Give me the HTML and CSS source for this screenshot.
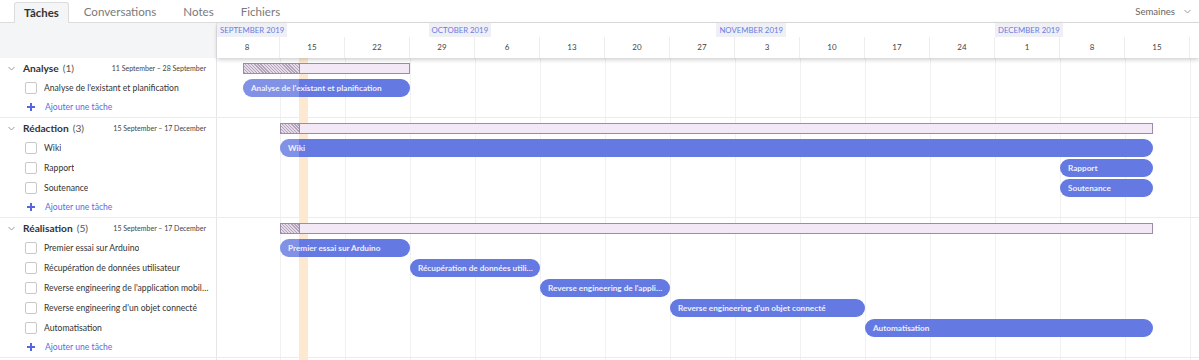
FILE: index.html
```html
<!DOCTYPE html>
<html lang="fr">
<head>
<meta charset="utf-8">
<title>Gantt</title>
<link rel="stylesheet" href="styles.css">
</head>
<body>
<div class="app">
  <div class="tabs">
    <div class="tab active">Tâches</div>
    <div class="tab">Conversations</div>
    <div class="tab">Notes</div>
    <div class="tab">Fichiers</div>
    <div class="view">Semaines <svg class="chev" width="7" height="5" viewBox="0 0 7 5"><path d="M0.5 1 L3.5 4 L6.5 1" fill="none" stroke="#999" stroke-width="1"/></svg></div>
  </div>
  <div class="head">
    <div class="head-left"></div>
    <div class="head-time">
      <div class="months">
        <span class="month" style="left:0px">September 2019</span>
        <span class="month" style="left:211.6px">October 2019</span>
        <span class="month" style="left:499.4px">November 2019</span>
        <span class="month" style="left:778px">December 2019</span>
      </div>
      <div class="weeks">
        <div class="week">8</div><div class="week">15</div><div class="week">22</div><div class="week">29</div>
        <div class="week">6</div><div class="week">13</div><div class="week">20</div><div class="week">27</div>
        <div class="week">3</div><div class="week">10</div><div class="week">17</div><div class="week">24</div>
        <div class="week">1</div><div class="week">8</div><div class="week">15</div><div class="week"></div>
      </div>
    </div>
  </div>
  <div class="body">
    <div class="today"></div>

    <div class="group">
      <div class="row">
        <div class="cell-left ghead">
          <svg class="caret" width="7" height="5" viewBox="0 0 7 5"><path d="M0.5 1 L3.5 4 L6.5 1" fill="none" stroke="#999" stroke-width="1"/></svg>
          <span class="gname">Analyse</span><span class="gcount">(1)</span>
          <span class="grange">11 September – 28 September</span>
        </div>
        <div class="cell-time">
          <div class="sum" style="left:25.9px;width:167.1px"><div class="sum-done" style="width:55.7px"></div></div>
        </div>
      </div>
      <div class="row">
        <div class="cell-left task"><span class="cb"></span><span class="tname">Analyse de l'existant et planification</span></div>
        <div class="cell-time"><div class="bar" style="left:25.9px;width:167.1px"><div class="bar-done" style="width:55.7px"></div><span class="blabel">Analyse de l'existant et planification</span></div></div>
      </div>
      <div class="row">
        <div class="cell-left add"><svg class="plus" width="8" height="8" viewBox="0 0 8 8"><path d="M4 0 V8 M0 4 H8" stroke="#5468dc" stroke-width="2"/></svg><span class="addtxt">Ajouter une tâche</span></div>
        <div class="cell-time"></div>
      </div>
    </div>

    <div class="group">
      <div class="row">
        <div class="cell-left ghead">
          <svg class="caret" width="7" height="5" viewBox="0 0 7 5"><path d="M0.5 1 L3.5 4 L6.5 1" fill="none" stroke="#999" stroke-width="1"/></svg>
          <span class="gname">Rédaction</span><span class="gcount">(3)</span>
          <span class="grange">15 September – 17 December</span>
        </div>
        <div class="cell-time">
          <div class="sum" style="left:63px;width:872.9px"><div class="sum-done" style="width:18.6px"></div></div>
        </div>
      </div>
      <div class="row">
        <div class="cell-left task"><span class="cb"></span><span class="tname">Wiki</span></div>
        <div class="cell-time"><div class="bar" style="left:63px;width:872.9px"><div class="bar-done" style="width:18.6px"></div><span class="blabel">Wiki</span></div></div>
      </div>
      <div class="row">
        <div class="cell-left task"><span class="cb"></span><span class="tname">Rapport</span></div>
        <div class="cell-time"><div class="bar" style="left:843px;width:92.9px"><span class="blabel">Rapport</span></div></div>
      </div>
      <div class="row">
        <div class="cell-left task"><span class="cb"></span><span class="tname">Soutenance</span></div>
        <div class="cell-time"><div class="bar" style="left:843px;width:92.9px"><span class="blabel">Soutenance</span></div></div>
      </div>
      <div class="row">
        <div class="cell-left add"><svg class="plus" width="8" height="8" viewBox="0 0 8 8"><path d="M4 0 V8 M0 4 H8" stroke="#5468dc" stroke-width="2"/></svg><span class="addtxt">Ajouter une tâche</span></div>
        <div class="cell-time"></div>
      </div>
    </div>

    <div class="group">
      <div class="row">
        <div class="cell-left ghead">
          <svg class="caret" width="7" height="5" viewBox="0 0 7 5"><path d="M0.5 1 L3.5 4 L6.5 1" fill="none" stroke="#999" stroke-width="1"/></svg>
          <span class="gname">Réalisation</span><span class="gcount">(5)</span>
          <span class="grange">15 September – 17 December</span>
        </div>
        <div class="cell-time">
          <div class="sum" style="left:63px;width:872.9px"><div class="sum-done" style="width:18.6px"></div></div>
        </div>
      </div>
      <div class="row">
        <div class="cell-left task"><span class="cb"></span><span class="tname">Premier essai sur Arduino</span></div>
        <div class="cell-time"><div class="bar" style="left:63px;width:130px"><div class="bar-done" style="width:18.6px"></div><span class="blabel">Premier essai sur Arduino</span></div></div>
      </div>
      <div class="row">
        <div class="cell-left task"><span class="cb"></span><span class="tname">Récupération de données utilisateur</span></div>
        <div class="cell-time"><div class="bar" style="left:193px;width:130px"><span class="blabel">Récupération de données utilisateur</span></div></div>
      </div>
      <div class="row">
        <div class="cell-left task"><span class="cb"></span><span class="tname">Reverse engineering de l'application mobile Android</span></div>
        <div class="cell-time"><div class="bar" style="left:323px;width:130px"><span class="blabel">Reverse engineering de l'application mobile Android</span></div></div>
      </div>
      <div class="row">
        <div class="cell-left task"><span class="cb"></span><span class="tname">Reverse engineering d'un objet connecté</span></div>
        <div class="cell-time"><div class="bar" style="left:453px;width:195px"><span class="blabel">Reverse engineering d'un objet connecté</span></div></div>
      </div>
      <div class="row">
        <div class="cell-left task"><span class="cb"></span><span class="tname">Automatisation</span></div>
        <div class="cell-time"><div class="bar" style="left:648px;width:287.9px"><span class="blabel">Automatisation</span></div></div>
      </div>
      <div class="row">
        <div class="cell-left add"><svg class="plus" width="8" height="8" viewBox="0 0 8 8"><path d="M4 0 V8 M0 4 H8" stroke="#5468dc" stroke-width="2"/></svg><span class="addtxt">Ajouter une tâche</span></div>
        <div class="cell-time"></div>
      </div>
    </div>
    <div class="row filler">
      <div class="cell-left"></div>
      <div class="cell-time"></div>
    </div>
  </div>
</div>
</body>
</html>
```
FILE: styles.css
```css
* { box-sizing: border-box; }
html, body { margin: 0; padding: 0; }
body {
  font-family: Lato, "Open Sans", "Liberation Sans", sans-serif;
  color: #333;
  background: #fff;
  width: 1199px;
  height: 360px;
  overflow: hidden;
}
.app { display: flex; flex-direction: column; height: 360px; }

/* Tabs */
.tabs {
  display: flex;
  align-items: flex-end;
  height: 23px;
  padding-left: 14px;
  border-bottom: 1px solid #dcdcdc;
  flex: none;
}
.tab {
  height: 20px;
  line-height: 19px;
  padding: 0 10px;
  margin-right: 5px;
  font-size: 11.6px;
  color: #7a7a7a;
}
.tab + .tab { margin-right: 7px; }
.tab.active {
  height: 21px;
  margin-bottom: -1px;
  background: #f3f5f7;
  border: 1px solid #dcdcdc;
  border-bottom: none;
  border-radius: 3px 3px 0 0;
  color: #333;
  font-size: 11.4px;
  font-weight: 700;
  padding: 0 9px;
}
.view {
  margin-left: auto;
  align-self: center;
  padding-right: 8px;
  font-size: 9.6px;
  color: #666;
  display: flex;
  align-items: center;
  gap: 9px;
}

/* Header */
.head {
  display: flex;
  height: 35px;
  flex: none;
  position: relative;
  z-index: 3;
}
.head-left {
  width: 217px;
  background: #f3f5f7;
  border-right: 1px solid #e6e6e6;
  flex: none;
}
.head-time {
  flex: 1;
  background: #fff;
  box-shadow: 0 2px 4px rgba(0,0,0,0.18);
  overflow: hidden;
  display: flex;
  flex-direction: column;
}
.months {
  position: relative;
  height: 14px;
  flex: none;
}
.month {
  position: absolute;
  top: 0;
  height: 14px;
  line-height: 14px;
  padding: 0 3px;
  background: #eef0f6;
  color: #6b7be0;
  font-size: 7.8px;
  text-transform: uppercase;
  white-space: nowrap;
}
.weeks {
  display: flex;
  margin-left: -2px;
  height: 21px;
}
.week {
  flex: none;
  width: 65px;
  border-right: 1px solid #ededed;
  text-align: center;
  font-size: 8px;
  line-height: 20px;
  color: #444;
}

/* Body */
.body {
  flex: 1;
  position: relative;
  overflow: hidden;
}
.today {
  position: absolute;
  top: 0;
  bottom: 0;
  left: 298.6px;
  width: 9.3px;
  background: #fde9d2;
  z-index: 1;
}
.group { border-bottom: 1px solid #ececec; }
.row {
  display: flex;
  height: 20px;
}
.group .row:last-child { height: 19px; }
.filler { height: 10px; }
.cell-left {
  width: 217px;
  flex: none;
  border-right: 1px solid #e6e6e6;
  display: flex;
  align-items: center;
  background: #fff;
  position: relative;
  z-index: 2;
}
.cell-time {
  flex: 1;
  position: relative;
  background-image: repeating-linear-gradient(to right, transparent 0, transparent 64px, #f1f1f1 64px, #f1f1f1 65px);
  background-position: -1px 0;
}

.ghead { padding-left: 8px; padding-right: 10px; }
.caret { margin-right: 8px; flex: none; }
.gname { font-size: 10.2px; font-weight: 700; color: #333; }
.gcount { font-size: 10.2px; color: #555; margin-left: 4px; }
.grange { margin-left: auto; font-size: 7px; color: #444; white-space: nowrap; }

.task { padding-left: 25px; padding-right: 5px; }
.cb {
  width: 12px;
  height: 12px;
  border: 1px solid #c8c8c8;
  border-radius: 2px;
  background: #fff;
  flex: none;
  margin-right: 7px;
}
.tname {
  font-size: 8.6px;
  color: #333;
  white-space: nowrap;
  overflow: hidden;
  text-overflow: ellipsis;
}
.add { padding-left: 27px; }
.add .addtxt { position: relative; top: -1px; }
.add .plus { position: relative; top: -1px; }
.plus { flex: none; margin-right: 10px; }
.addtxt { font-size: 8.6px; color: #5b6ee1; }

/* Bars */
.sum {
  position: absolute;
  top: 5px;
  height: 11px;
  border: 1px solid #9d8ca8;
  background: #f3e8f5;
  z-index: 2;
  overflow: hidden;
}
.sum-done {
  height: 100%;
  background-color: #e6dbe9;
  background-image: repeating-linear-gradient(45deg, #b3a3b9 0, #b3a3b9 1px, transparent 1px, transparent 2.2px);
  border-right: 1px solid #9d8ca8;
}
.bar {
  position: absolute;
  top: 1px;
  height: 18px;
  border-radius: 9px;
  background: #6479e1;
  z-index: 2;
  overflow: hidden;
  display: flex;
  align-items: center;
}
.bar-done {
  position: absolute;
  left: 0;
  top: 0;
  bottom: 0;
  background: rgba(255,255,255,0.18);
}
.blabel {
  position: relative;
  padding: 0 7px 0 8px;
  font-size: 8.2px;
  font-weight: 700;
  color: #eef0fc;
  white-space: nowrap;
  overflow: hidden;
  text-overflow: ellipsis;
}
```
